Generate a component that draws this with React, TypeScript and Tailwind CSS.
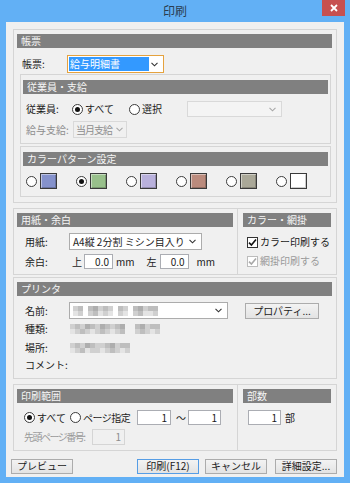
import React from "react";

const F = "font-['Noto_Sans_CJK_JP','Noto_Sans',sans-serif]";

const Chevron = ({ c = "#333" }: { c?: string }) => (
  <svg width="7" height="5" viewBox="0 0 7 5" className="shrink-0">
    <path d="M0.5 0.8 L3.5 3.8 L6.5 0.8" fill="none" stroke={c} strokeWidth="1.1" />
  </svg>
);

const Header = ({ children, cls }: { children: React.ReactNode; cls: string }) => (
  <div className={`h-[14px] shrink-0 bg-[#808080] text-[#f6f6f6] text-[10px] leading-[14px] pl-[4px] ${cls}`}>{children}</div>
);

const Radio = ({ on }: { on?: boolean }) => (
  <span className="w-[11px] h-[11px] rounded-full border border-[#3c3c3c] bg-white flex items-center justify-center shrink-0">
    {on && <span className="w-[5px] h-[5px] rounded-full bg-[#111]" />}
  </span>
);

const Check = ({ disabled }: { disabled?: boolean }) => (
  <span
    className={`w-[11px] h-[11px] border ${disabled ? "border-[#bcbcbc]" : "border-[#333]"} bg-white flex items-center justify-center shrink-0`}
  >
    <svg width="9" height="9" viewBox="0 0 9 9">
      <path d="M1 4.6 L3.4 7 L8 1.4" fill="none" stroke={disabled ? "#a8a8a8" : "#111"} strokeWidth="1.6" />
    </svg>
  </span>
);

const pal: Record<string, string> = {
  a: "#e4e4e4",
  b: "#d0d0d0",
  c: "#bebebe",
  d: "#aeaeae",
};

const Mosaic = ({ rows }: { rows: string[] }) => (
  <div className="flex flex-col">
    {rows.map((r, i) => (
      <div key={i} className="flex">
        {r.split("").map((ch, j) => (
          <span
            key={j}
            className="w-[5px] h-[5px]"
            style={{ background: ch === " " ? "transparent" : pal[ch] }}
          />
        ))}
      </div>
    ))}
  </div>
);

const Input = ({ w, v, disabled }: { w: string; v: string; disabled?: boolean }) => (
  <div
    className={`${w} h-full border ${disabled ? "border-[#d5d5d5] bg-[#f0f0f0] text-[#8d8d8d]" : "border-[#abadb3] bg-white"} flex items-center justify-end pr-[3px]`}
  >
    {v}
  </div>
);

const swatches = [
  "bg-[#8592cc]",
  "bg-[#98c08b]",
  "bg-[#b9b1dc]",
  "bg-[#bb8b7d]",
  "bg-[#aaa898]",
  "bg-[#ffffff]",
];

const Btn = ({ children, cls }: { children: React.ReactNode; cls: string }) => (
  <div
    className={`h-[15px] w-[62px] border bg-gradient-to-b from-[#f3f3f3] to-[#e3e3e3] flex items-center justify-center ${cls}`}
  >
    {children}
  </div>
);

export default function App() {
  return (
    <div
      className={`w-[350px] h-[483px] bg-[#62b0f5] relative flex flex-col overflow-hidden whitespace-nowrap ${F} text-[10px] text-[#1b1b1b] leading-none`}
    >
      <div className="h-[22px] shrink-0 flex items-center justify-center text-[12px] text-[#2a3d4f]">印刷</div>
      <div className="absolute top-0 right-[5px] w-[23px] h-[16px] bg-[#c75050] flex items-center justify-center">
        <svg width="8" height="8" viewBox="0 0 8 8">
          <path d="M1 1 L7 7 M7 1 L1 7" stroke="white" strokeWidth="1.8" />
        </svg>
      </div>

      <div className="mx-[6px] h-[455px] bg-[#f0f0f0] px-[7px] pt-[7px] flex flex-col">
        {/* 帳票 */}
        <div className="h-[174px] shrink-0 border border-[#d5d5d5] flex flex-col">
          <Header cls="mt-[4px] ml-[3px] mr-[4px]">帳票</Header>
          <div className="mt-[7px] h-[18px] flex items-center pl-[8px]">
            <span className="w-[45px]">帳票:</span>
            <div className="w-[97px] h-[18px] border border-[#e5a23e] bg-white flex items-center pl-[1px] pr-[5px]">
              <span className="w-[80px] h-[14px] bg-[#3399ff] text-white flex items-center pl-[1px]">給与明細書</span>
              <span className="ml-auto">
                <Chevron />
              </span>
            </div>
          </div>

          <div className="mt-[1px] ml-[6px] w-[311px] h-[70px] border border-[#d5d5d5] flex flex-col">
            <Header cls="mt-[5px] mx-[2px]">従業員・支給</Header>
            <div className="mt-[6px] h-[18px] flex items-center pl-[5px]">
              <span className="w-[46px]">従業員:</span>
              <div className="w-[57px] flex items-center gap-[2px]">
                <Radio on />
                <span>すべて</span>
              </div>
              <div className="w-[58px] flex items-center gap-[2px]">
                <Radio />
                <span>選択</span>
              </div>
              <div className="w-[95px] h-[16px] border border-[#d9d9d9] bg-[#f4f4f4] flex items-center justify-end pr-[5px]">
                <Chevron c="#a8a8a8" />
              </div>
            </div>
            <div className="mt-[3px] h-[17px] flex items-center pl-[5px] text-[#8d8d8d]">
              <span className="w-[47px]">給与支給:</span>
              <div className="w-[54px] h-[17px] border border-[#d9d9d9] flex items-center pl-[2px] pr-[3px]">
                <span className="tracking-[-1px]">当月支給</span>
                <span className="ml-auto">
                  <Chevron c="#a8a8a8" />
                </span>
              </div>
            </div>
          </div>

          <div className="mt-[2px] ml-[6px] w-[311px] h-[51px] border border-[#d5d5d5] flex flex-col">
            <Header cls="mt-[5px] mx-[2px]">カラーパターン設定</Header>
            <div className="mt-[6px] h-[18px] flex items-center pl-[5px] gap-[19px]">
              {swatches.map((c, i) => (
                <div key={i} className="flex items-center gap-[3px]">
                  <Radio on={i === 1} />
                  <span
                    className={`w-[17px] h-[16px] border border-[#3a3a3a] shadow-[inset_1px_1px_0_rgba(255,255,255,0.45),inset_-1px_-1px_0_rgba(0,0,0,0.2)] ${c}`}
                  />
                </div>
              ))}
            </div>
          </div>
        </div>

        {/* 用紙・余白 / カラー・網掛 */}
        <div className="mt-[5px] h-[67px] shrink-0 flex">
          <div className="w-[225px] h-full border border-[#d5d5d5] flex flex-col">
            <Header cls="mt-[4px] ml-[3px] mr-[4px]">用紙・余白</Header>
            <div className="mt-[6px] h-[17px] flex items-center pl-[11px]">
              <span className="w-[44px]">用紙:</span>
              <div className="w-[133px] h-[17px] border border-[#acacac] bg-white flex items-center pl-[3px] pr-[5px]">
                <span>A4縦 2分割 ミシン目入り</span>
                <span className="ml-auto">
                  <Chevron />
                </span>
              </div>
            </div>
            <div className="mt-[4px] h-[15px] flex items-center pl-[11px]">
              <span className="w-[44px]">余白:</span>
              <span className="ml-[3px] w-[10px]">上</span>
              <span className="ml-[2px] h-full flex">
                <Input w="w-[29px]" v="0.0" />
              </span>
              <span className="ml-[3px]">mm</span>
              <span className="ml-[12px] w-[10px]">左</span>
              <span className="ml-[3px] h-full flex">
                <Input w="w-[29px]" v="0.0" />
              </span>
              <span className="ml-[8px]">mm</span>
            </div>
          </div>
          <div className="w-[99px] h-full border border-l-0 border-[#d5d5d5] flex flex-col">
            <Header cls="mt-[4px] ml-[5px] mr-[5px]">カラー・網掛</Header>
            <div className="mt-[8px] h-[14px] flex items-center pl-[9px] gap-[2px]">
              <Check />
              <span>カラー印刷する</span>
            </div>
            <div className="mt-[5px] h-[14px] flex items-center pl-[9px] gap-[2px] text-[#9a9a9a]">
              <Check disabled />
              <span>網掛印刷する</span>
            </div>
          </div>
        </div>

        {/* プリンタ */}
        <div className="mt-[2px] h-[102px] shrink-0 border border-[#d5d5d5] flex flex-col">
          <Header cls="mt-[4px] ml-[3px] mr-[4px]">プリンタ</Header>
          <div className="mt-[6px] h-[17px] flex items-center pl-[11px]">
            <span className="w-[44px]">名前:</span>
            <div className="w-[159px] h-[17px] border border-[#acacac] bg-white flex items-center pl-[3px] pr-[5px]">
              <Mosaic rows={["bc cdbcb cb cdbcc", "ab bcaba ba bcaab"]} />
              <span className="ml-auto">
                <Chevron />
              </span>
            </div>
            <Btn cls="ml-[17px] w-[74px] h-[16px] border-[#acacac]">プロパティ...</Btn>
          </div>
          <div className="mt-[3px] h-[14px] flex items-center pl-[11px]">
            <span className="w-[45px]">種類:</span>
            <Mosaic rows={["bcbdcbdcbcd  cdbcc", "abcbabcbabc  bcbab"]} />
          </div>
          <div className="mt-[5px] h-[14px] flex items-center pl-[11px]">
            <span className="w-[45px]">場所:</span>
            <Mosaic rows={["bcbdcbbcdbcc", "abcabbabcbab"]} />
          </div>
          <div className="mt-[3px] h-[14px] flex items-center pl-[11px]">
            <span>コメント:</span>
          </div>
        </div>

        {/* 印刷範囲 / 部数 */}
        <div className="mt-[5px] h-[67px] shrink-0 flex">
          <div className="w-[225px] h-full border border-[#d5d5d5] flex flex-col">
            <Header cls="mt-[4px] ml-[3px] mr-[4px]">印刷範囲</Header>
            <div className="mt-[7px] h-[15px] flex items-center pl-[10px]">
              <div className="w-[46px] flex items-center gap-[2px]">
                <Radio on />
                <span>すべて</span>
              </div>
              <div className="w-[67px] flex items-center gap-[2px]">
                <Radio />
                <span className="tracking-[-0.5px]">ページ指定</span>
              </div>
              <span className="h-full flex">
                <Input w="w-[34px]" v="1" />
              </span>
              <span className="ml-[5px] w-[12px]">～</span>
              <span className="h-full flex">
                <Input w="w-[33px]" v="1" />
              </span>
            </div>
            <div className="mt-[4px] h-[16px] flex items-center pl-[10px] text-[#9a9a9a]">
              <span className="w-[68px] tracking-[-1.5px]">先頭ページ番号:</span>
              <span className="h-full flex">
                <Input w="w-[33px]" v="1" disabled />
              </span>
            </div>
          </div>
          <div className="w-[99px] h-full border border-l-0 border-[#d5d5d5] flex flex-col">
            <Header cls="mt-[4px] ml-[5px] mr-[5px]">部数</Header>
            <div className="mt-[7px] h-[15px] flex items-center pl-[10px]">
              <span className="h-full flex">
                <Input w="w-[33px]" v="1" />
              </span>
              <span className="ml-[4px]">部</span>
            </div>
          </div>
        </div>

        {/* buttons */}
        <div className="mt-[7px] h-[16px] flex items-center">
          <Btn cls="-ml-[2px] border-[#acacac]">プレビュー</Btn>
          <Btn cls="ml-[64px] border-[#569de5]">印刷(F12)</Btn>
          <Btn cls="ml-[6px] border-[#acacac]">キャンセル</Btn>
          <Btn cls="ml-[8px] border-[#acacac]">詳細設定...</Btn>
        </div>
      </div>
    </div>
  );
}
